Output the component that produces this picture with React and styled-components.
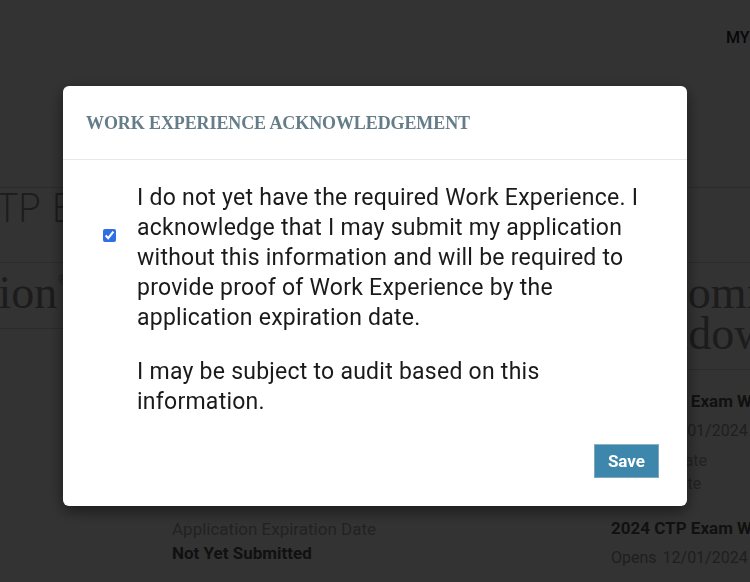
import React from "react";
import styled, { createGlobalStyle } from "styled-components";

const GlobalStyle = createGlobalStyle`
  html, body {
    margin: 0;
    padding: 0;
    background: #ffffff;
    overflow: hidden;
    width: 750px;
    height: 582px;
  }
  body {
    font-family: Roboto, "Liberation Sans", Arial, sans-serif;
    color: #333;
  }
  * { box-sizing: border-box; }
`;

/* ---------- underlying page ---------- */

const Page = styled.div`
  width: 750px;
  height: 582px;
  overflow: hidden;
`;

const Header = styled.header`
  display: grid;
  grid-template-columns: 726px max-content;
  height: 187px;
  padding-top: 29px;
`;

const NavLink = styled.span`
  font-family: Roboto, "Liberation Sans", sans-serif;
  font-size: 16px;
  font-weight: 500;
  line-height: 18px;
  word-spacing: 6px;
  color: #2a2a2a;
  white-space: nowrap;
  text-transform: uppercase;
`;

const TitleBand = styled.div`
  border-top: 1px solid #d5d5d5;
  border-bottom: 1px solid #d5d5d5;
  height: 76px;
  margin-left: -28px;
  width: 1000px;
`;

const PageTitle = styled.h1`
  margin: 0;
  font-family: "Open Sans", "Liberation Sans", sans-serif;
  font-weight: 300;
  font-size: 40px;
  line-height: 38px;
  color: #8a8a8a;
  white-space: nowrap;
`;

const Columns = styled.div`
  display: grid;
  grid-template-columns: 771px 340px;
  margin-left: -160px;
`;

const Column = styled.section`
  display: flex;
  flex-direction: column;
`;

const ColumnHeading = styled.h2`
  margin: 0;
  padding: 9px 0 15px;
  border-bottom: 1px solid #d5d5d5;
  font-family: "Liberation Serif", "Times New Roman", serif;
  font-weight: 400;
  font-size: 46px;
  line-height: 41px;
  color: #8a8a8a;
  white-space: nowrap;

  sup {
    font-family: "Liberation Sans", sans-serif;
    font-size: 12px;
    vertical-align: top;
    line-height: 16px;
    margin-left: 1px;
  }
`;

const LeftBody = styled.div`
  padding: 60px 0 0 332px;
  display: flex;
  flex-direction: column;
  gap: 16px;
`;

const InfoItem = styled.div`
  display: flex;
  flex-direction: column;
`;

const InfoLabel = styled.span`
  font-size: 17px;
  line-height: 24px;
  color: #a8a8a8;
  white-space: nowrap;
`;

const InfoValue = styled.span`
  font-size: 17px;
  line-height: 24px;
  font-weight: 700;
  color: #555;
  white-space: nowrap;
`;

const RightBody = styled.div`
  padding: 16px 0 0 0;
  display: flex;
  flex-direction: column;
  gap: 18px;
`;

const WindowItem = styled.div`
  display: flex;
  flex-direction: column;
`;

const WindowTitle = styled.span`
  font-size: 17px;
  font-weight: 700;
  line-height: 30px;
  color: #555;
  white-space: nowrap;
`;

const WindowDate = styled.span`
  font-size: 16px;
  line-height: 30px;
  color: #999;
  white-space: nowrap;
  word-spacing: 2px;
`;

const WindowNotes = styled.div`
  display: flex;
  flex-direction: column;
  margin-top: 3px;
`;

const WindowNote = styled.span`
  font-size: 16px;
  line-height: 23px;
  color: #a8a8a8;
  white-space: nowrap;
`;

/* ---------- modal ---------- */

const Backdrop = styled.div`
  position: fixed;
  inset: 0;
  background: rgba(0, 0, 0, 0.8);
  display: flex;
  justify-content: center;
  align-items: flex-start;
  padding-top: 86px;
`;

const Dialog = styled.div`
  width: 624px;
  background: #fff;
  border-radius: 6px;
  box-shadow: 0 5px 15px rgba(0, 0, 0, 0.5);
  display: flex;
  flex-direction: column;
`;

const DialogHeader = styled.div`
  padding: 27px 23px 26px;
  border-bottom: 1px solid #e6e8ea;
`;

const DialogTitle = styled.h4`
  margin: 0;
  font-family: "Liberation Serif", "Times New Roman", serif;
  font-weight: 700;
  font-size: 18px;
  line-height: 20px;
  letter-spacing: -0.1px;
  color: #657d89;
  text-transform: uppercase;
`;

const DialogBody = styled.div`
  padding: 23px 40px 0;
  display: flex;
  align-items: flex-start;
  gap: 21px;
`;

const Checkbox = styled.input`
  margin: 46px 0 0;
  width: 13px;
  height: 13px;
  flex: none;
  accent-color: #2f6ee3;
`;

const Statement = styled.div`
  display: flex;
  flex-direction: column;
  gap: 24px;
`;

const Paragraph = styled.p`
  margin: 0;
  font-family: Roboto, "Liberation Sans", sans-serif;
  font-size: 23px;
  line-height: 30px;
  letter-spacing: 0.25px;
  color: #1a1a1a;
  white-space: nowrap;
`;

const DialogFooter = styled.div`
  display: flex;
  justify-content: flex-end;
  padding: 27px 28px 28px;
`;

const SaveButton = styled.button`
  height: 34px;
  padding: 0 13px;
  background: #3d87ad;
  border: 1px solid #7fa6bb;
  border-top-color: #8fb3c6;
  border-radius: 0;
  color: #fff;
  font-family: Roboto, "Liberation Sans", sans-serif;
  font-weight: 700;
  font-size: 17px;
  line-height: 20px;
  cursor: pointer;
`;

export default function App() {
  return (
    <>
      <GlobalStyle />
      <Page>
        <Header>
          <div />
          <NavLink>My Account</NavLink>
        </Header>
        <TitleBand>
          <PageTitle>CTP Exam Application</PageTitle>
        </TitleBand>
        <Columns>
          <Column>
            <ColumnHeading>
              Application<sup>®</sup>
            </ColumnHeading>
            <LeftBody>
              <InfoItem>
                <InfoLabel>Application Status</InfoLabel>
                <InfoValue>Not Started</InfoValue>
              </InfoItem>
              <InfoItem>
                <InfoLabel>Application Submitted Date</InfoLabel>
                <InfoValue>Not Yet Submitted</InfoValue>
              </InfoItem>
              <InfoItem>
                <InfoLabel>Application Expiration Date</InfoLabel>
                <InfoValue>Not Yet Submitted</InfoValue>
              </InfoItem>
            </LeftBody>
          </Column>
          <Column>
            <ColumnHeading>
              Upcoming
              <br />
              Windows
            </ColumnHeading>
            <RightBody>
              <WindowItem>
                <WindowTitle>2024 CTP Exam Window</WindowTitle>
                <WindowDate>Opens 09/01/2024</WindowDate>
                <WindowNotes>
                  <WindowNote>Opening Date</WindowNote>
                  <WindowNote>Closing Date</WindowNote>
                </WindowNotes>
              </WindowItem>
              <WindowItem>
                <WindowTitle>2024 CTP Exam Window</WindowTitle>
                <WindowDate>Opens 12/01/2024</WindowDate>
              </WindowItem>
            </RightBody>
          </Column>
        </Columns>
      </Page>

      <Backdrop>
        <Dialog role="dialog" aria-labelledby="we-title">
          <DialogHeader>
            <DialogTitle id="we-title">Work Experience Acknowledgement</DialogTitle>
          </DialogHeader>
          <DialogBody>
            <Checkbox type="checkbox" defaultChecked aria-label="Acknowledge" />
            <Statement>
              <Paragraph>
                I do not yet have the required Work Experience. I<br />
                acknowledge that I may submit my application<br />
                without this information and will be required to<br />
                provide proof of Work Experience by the<br />
                application expiration date.
              </Paragraph>
              <Paragraph>
                I may be subject to audit based on this<br />
                information.
              </Paragraph>
            </Statement>
          </DialogBody>
          <DialogFooter>
            <SaveButton type="button">Save</SaveButton>
          </DialogFooter>
        </Dialog>
      </Backdrop>
    </>
  );
}
